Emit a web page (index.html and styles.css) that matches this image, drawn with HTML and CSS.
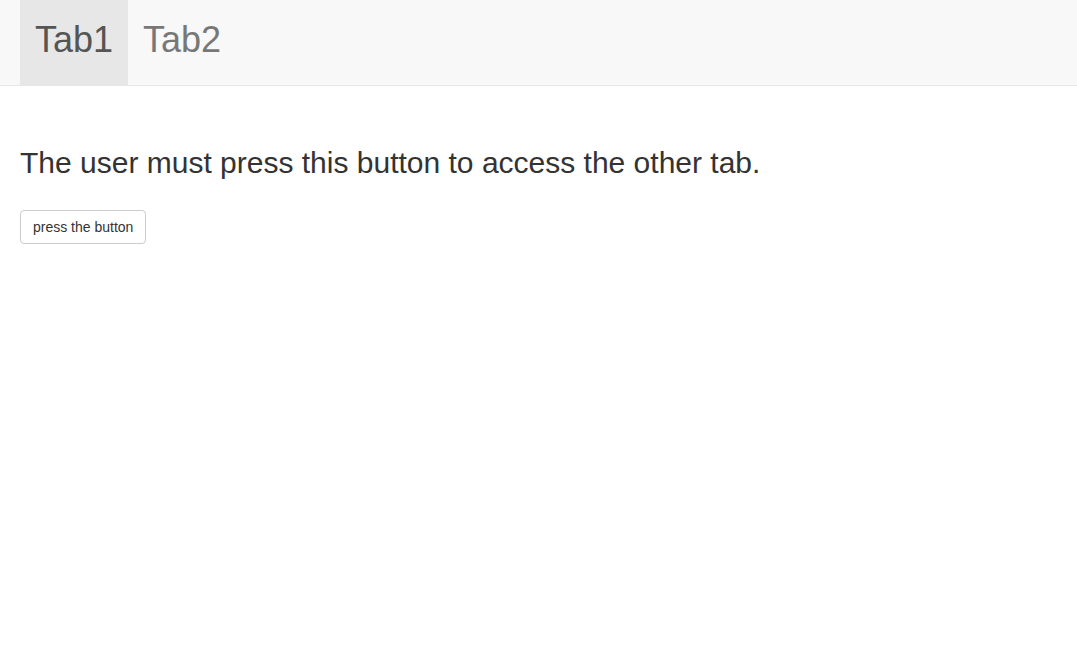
FILE: index.html
```html
<!DOCTYPE html>
<html>
<head>
<meta charset="utf-8">
<link rel="stylesheet" href="styles.css">
</head>
<body>
<nav class="navbar">
  <ul class="tabs">
    <li class="tab active"><a href="#">Tab1</a></li>
    <li class="tab"><a href="#">Tab2</a></li>
  </ul>
</nav>
<main class="content">
  <h2 class="title">The user must press this button to access the other tab.</h2>
  <button class="btn" type="button">press the button</button>
</main>
</body>
</html>
```
FILE: styles.css
```css
html, body {
  margin: 0;
  padding: 0;
  background: #fff;
  font-family: "Liberation Sans", Arial, sans-serif;
  color: #333;
}
.navbar {
  height: 85px;
  background: #f8f8f8;
  border-bottom: 1px solid #e7e7e7;
  padding: 0 20px;
}
.tabs {
  list-style: none;
  margin: 0;
  padding: 0;
  display: flex;
  height: 100%;
}
.tab a {
  display: block;
  height: 85px;
  box-sizing: border-box;
  padding: 20px 15px 0;
  font-size: 36px;
  line-height: 40px;
  color: #777;
  text-decoration: none;
}
.tab.active a {
  background: #e7e7e7;
  color: #555;
}
.content {
  padding: 0 20px;
}
.title {
  font-size: 30px;
  font-weight: 400;
  line-height: 1.1;
  margin: 60px 0 31px;
}
.btn {
  font-family: inherit;
  font-size: 14px;
  line-height: 20px;
  padding: 6px 12px;
  color: #333;
  background: #fff;
  border: 1px solid #ccc;
  border-radius: 4px;
}
```
